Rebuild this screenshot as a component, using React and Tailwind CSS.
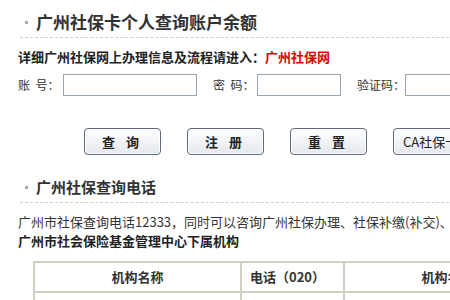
import React from 'react';

const font = { fontFamily: '"SimSun", "Noto Sans CJK SC", "Liberation Sans", sans-serif' };

function Title({ text, size }) {
    return (
        <div className="ml-[20px] border-b border-dashed border-[#cfcfcf] flex items-center">
            <span className="w-[3px] h-[3px] bg-[#aaa] ml-[5px] mr-[8px] shrink-0" />
            <span className={`font-bold text-[#333] ${size}`}>{text}</span>
        </div>
    );
}

function Btn({ children }) {
    return (
        <button className="w-[77px] h-[27px] shrink-0 rounded-[4px] border border-[#5d6b7a] bg-gradient-to-b from-white to-[#e4e8ec] text-[13px] font-bold text-[#222] tracking-[4px] shadow-[inset_0_0_0_1px_#fff]">
            {children}
        </button>
    );
}

export default function App() {
    return (
        <div className="w-[450px] h-[300px] overflow-hidden bg-white text-[#333]" style={font}>
            <div className="w-[600px]">
                <div className="pt-[8px]">
                    <Title text="广州社保卡个人查询账户余额" size="text-[17px] leading-[28px] pb-[1px]" />
                </div>

                <div className="ml-[18px] mt-[9px] text-[13px] font-bold leading-[20px] text-[#222]">
                    详细广州社保网上办理信息及流程请进入：<span className="text-[#e00000]">广州社保网</span>
                </div>

                <div className="ml-[18px] mt-[7px] flex items-center text-[12px] text-[#333]">
                    <span className="w-[45px]">账&nbsp;&nbsp;号：</span>
                    <div className="w-[134px] h-[22px] border border-[#9aa6b2]" />
                    <span className="ml-[16px] w-[44px]">密&nbsp;&nbsp;码：</span>
                    <div className="w-[84px] h-[22px] border border-[#9aa6b2]" />
                    <span className="ml-[16px] w-[48px]">验证码：</span>
                    <div className="w-[134px] h-[22px] border border-[#9aa6b2]" />
                </div>

                <div className="ml-[84px] mt-[32px] flex gap-[26px]">
                    <Btn>查 询</Btn>
                    <Btn>注 册</Btn>
                    <Btn>重 置</Btn>
                    <button className="w-[100px] h-[27px] shrink-0 rounded-[4px] border border-[#5d6b7a] bg-gradient-to-b from-white to-[#e4e8ec] text-[13px] text-[#222] text-left pl-[9px] shadow-[inset_0_0_0_1px_#fff]">
                        CA社保卡
                    </button>
                </div>

                <div className="mt-[18px]">
                    <Title text="广州社保查询电话" size="text-[15px] leading-[28px] pb-[1px]" />
                </div>

                <div className="ml-[18px] mt-[9px] text-[13px] leading-[19px] whitespace-nowrap text-[#333]">
                    广州市社保查询电话12333，同时可以咨询广州社保办理、社保补缴(补交)、退休手续等
                </div>
                <div className="ml-[18px] text-[13px] font-bold leading-[19px] text-[#222]">
                    广州市社会保险基金管理中心下属机构
                </div>

                <table className="ml-[33px] mt-[11px] border-collapse border-2 border-[#cfcfc3] text-[13px] font-bold text-[#333]">
                    <tbody>
                        <tr className="h-[30px]">
                            <td className="w-[207px] border-2 border-[#cfcfc3] text-center">机构名称</td>
                            <td className="w-[103px] border-2 border-[#cfcfc3] text-left pl-[8px]">电话（020）</td>
                            <td className="w-[207px] border-2 border-[#cfcfc3] text-center">机构名称</td>
                        </tr>
                        <tr className="h-[30px]">
                            <td className="border-2 border-[#cfcfc3]"></td>
                            <td className="border-2 border-[#cfcfc3]"></td>
                            <td className="border-2 border-[#cfcfc3]"></td>
                        </tr>
                    </tbody>
                </table>
            </div>
        </div>
    );
}
